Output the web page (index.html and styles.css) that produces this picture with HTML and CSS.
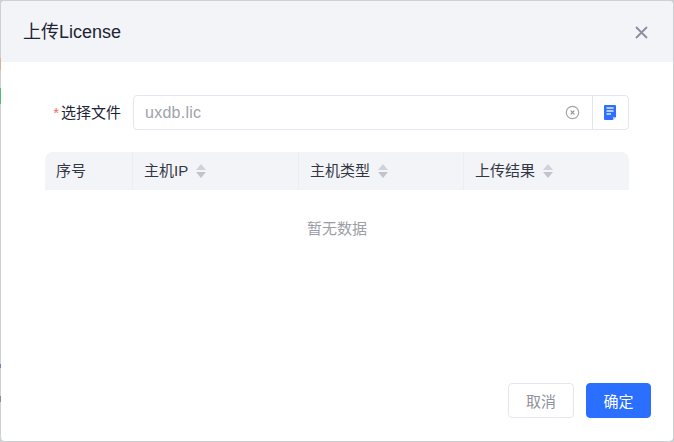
FILE: index.html
```html
<!DOCTYPE html>
<html lang="zh">
<head>
<meta charset="utf-8">
<title>上传License</title>
<link rel="stylesheet" href="styles.css">
</head>
<body>
<div class="backdrop-marks">
  <i class="mark mark-orange"></i>
  <i class="mark mark-green"></i>
  <i class="mark mark-blue"></i>
  <i class="mark mark-amber"></i>
</div>
<section class="dialog">
  <header class="dialog-header">
    <h1 class="dialog-title">上传License</h1>
    <button class="close" aria-label="关闭">
      <svg width="13" height="13" viewBox="0 0 13 13"><path d="M1 1 12 12M12 1 1 12" stroke="#8a8f9e" stroke-width="1.8" fill="none"/></svg>
    </button>
  </header>
  <div class="dialog-body">
    <div class="form-row">
      <label class="form-label"><span class="req">*</span>选择文件</label>
      <div class="file-input">
        <span class="file-value">uxdb.lic</span>
        <svg class="clear" width="15" height="15" viewBox="0 0 15 15"><circle cx="7.5" cy="7.5" r="6.2" fill="none" stroke="#a3a3a8" stroke-width="1.2"/><path d="M5.7 5.700 9.300 9.300M9.300 5.700 5.700 9.300" stroke="#8f8f94" stroke-width="1.2"/></svg>
        <span class="file-btn">
          <svg width="12" height="15" viewBox="0 0 12 15"><path d="M1 0H11a1 1 0 0 1 1 1V12L8.500 15H1a1 1 0 0 1-1-1V1a1 1 0 0 1 1-1Z" fill="#2f6fff"/><path d="M2.500 3H9.500M2.500 6H9.500M2.500 9H7" stroke="#dfe9ff" stroke-width="1.300"/><path d="M9 15V12H12Z" fill="#a9c4ff"/></svg>
        </span>
      </div>
    </div>
    <div class="table">
      <div class="thead">
        <div class="th th-no">序号</div>
        <div class="th">主机IP<span class="sort"><b class="up"></b><b class="down"></b></span></div>
        <div class="th">主机类型<span class="sort"><b class="up"></b><b class="down"></b></span></div>
        <div class="th">上传结果<span class="sort"><b class="up"></b><b class="down"></b></span></div>
      </div>
      <div class="empty">暂无数据</div>
    </div>
  </div>
  <footer class="dialog-footer">
    <button class="btn btn-default">取消</button>
    <button class="btn btn-primary">确定</button>
  </footer>
</section>
</body>
</html>
```
FILE: styles.css
```css
* { box-sizing: border-box; }
html, body { margin: 0; height: 100%; }
body {
  width: 674px;
  height: 442px;
  padding: 1px;
  background: #cfd0d4;
  font-family: "Liberation Sans", "Noto Sans CJK SC", sans-serif;
  overflow: hidden;
  position: relative;
}
.backdrop-marks { position: absolute; left: 0; top: 0; width: 1px; height: 442px; }
.mark { position: absolute; left: 0; width: 1px; display: block; }
.mark-orange { top: 58px; height: 12px; background: #d9b48c; }
.mark-green { top: 88px; height: 16px; background: #55b878; }
.mark-blue { top: 364px; height: 4px; background: #6f86b8; }
.mark-amber { top: 396px; height: 6px; background: #8d8f80; }
.dialog {
  width: 672px;
  height: 440px;
  background: #fff;
  border-radius: 4px;
  display: flex;
  flex-direction: column;
  overflow: hidden;
}
.dialog-header {
  height: 61px;
  flex: none;
  background: #f3f4f8;
  display: flex;
  align-items: center;
  justify-content: space-between;
  padding: 0 25px 0 22px;
}
.dialog-title {
  margin: 0;
  font-size: 18px;
  font-weight: 400;
  color: #1d2433;
  position: relative;
  top: -2px;
}
.close {
  border: 0;
  padding: 0;
  background: none;
  width: 13px;
  height: 13px;
  display: flex;
  position: relative;
  top: 1px;
}
.dialog-body { padding: 33px 44px 0 44px; }
.form-row { display: flex; align-items: center; }
.form-label {
  width: 88px;
  padding-right: 12px;
  text-align: right;
  font-size: 15px;
  color: #1d2433;
  white-space: nowrap;
  position: relative;
  top: -1px;
}
.req { color: #f56c6c; margin-right: 2px; }
.file-input {
  flex: 1;
  height: 35px;
  border: 1px solid #e4e5ef;
  border-radius: 4px;
  display: flex;
  align-items: center;
  padding-left: 11px;
}
.file-value { flex: 1; color: #a0a2ab; font-size: 16px; letter-spacing: 0.25px; }
.clear { margin-right: 12px; }
.file-btn {
  width: 36px;
  height: 100%;
  flex: none;
  border-left: 1px solid #e4e5ef;
  display: flex;
  align-items: center;
  justify-content: center;
  padding-bottom: 1px;
  padding-right: 1px;
}
.table { margin-top: 22px; }
.thead {
  height: 38px;
  background: #f3f4f8;
  border-radius: 8px 8px 0 0;
  display: grid;
  grid-template-columns: 87px 166px 165px 166px;
}
.th {
  display: flex;
  align-items: center;
  padding: 0 0 3px 11px;
  font-size: 15px;
  color: #333744;
  border-left: 1px solid #ebedf3;
}
.th-no { border-left: 0; padding-left: 11px; }
.sort { display: inline-flex; flex-direction: column; gap: 2px; margin-left: 8px; position: relative; top: 1px; }
.sort b { display: block; width: 0; height: 0; border-left: 5px solid transparent; border-right: 5px solid transparent; }
.up { border-bottom: 6px solid #d0d2d9; }
.down { border-top: 6px solid #c1c4cc; }
.empty {
  height: 76px;
  padding-bottom: 2px;
  display: flex;
  align-items: center;
  justify-content: center;
  font-size: 15px;
  color: #9c9ea6;
}
.dialog-footer {
  margin-top: auto;
  padding: 0 22px 23px 0;
  display: flex;
  justify-content: flex-end;
  gap: 12px;
}
.btn {
  width: 66px;
  height: 35px;
  border-radius: 4px;
  font-family: inherit;
  font-size: 15px;
  padding: 0;
}
.btn-default { background: #fff; border: 1px solid #e4e5ef; color: #8f919b; }
.btn-primary { width: 65px; background: #2a6fff; border: 1px solid #2a6fff; color: #fff; }
```
